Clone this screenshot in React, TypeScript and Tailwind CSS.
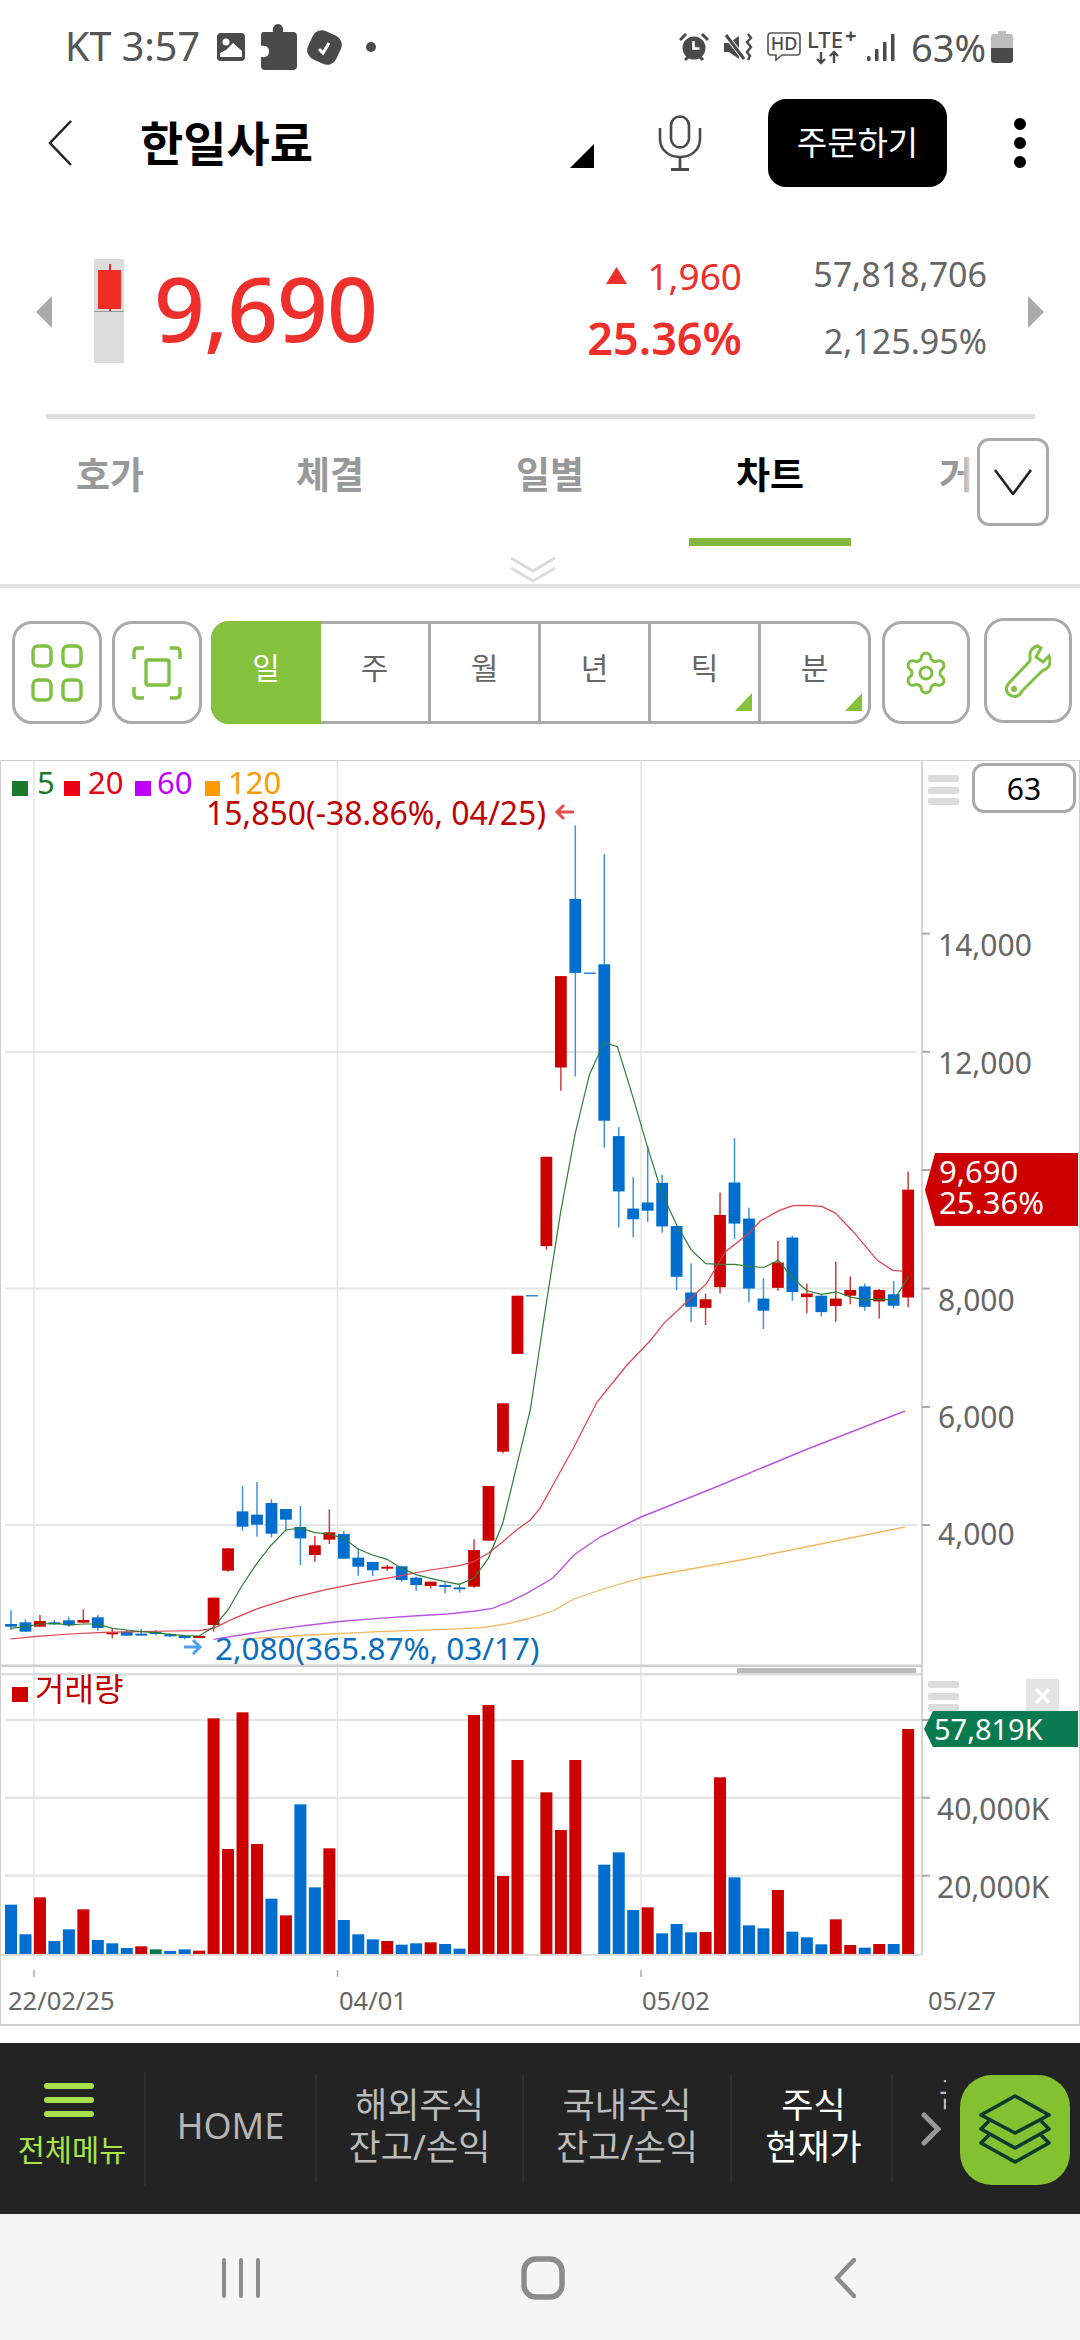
import { Settings } from 'lucide-react'

// traced from the reference crops: a = lower left crop, b = right hand crop
const ax = (x: number) => x / 2.904
const ay = (y: number) => 1400 + y / 3
const bx = (x: number) => 480 + x / 2.605
const by = (y: number) => 780 + y / 2.8

const BLUE = '#006ecf'
const RED = '#cc0000'

type C = [string, number, number, number, number]

const candlesA: C[] = [
  ['b', 630, 672, 680, 690], ['b', 658, 667, 695, 695], ['r', 645, 663, 680, 680], ['b', 660, 667, 670, 675],
  ['b', 650, 661, 676, 680], ['r', 628, 660, 668, 668], ['b', 645, 652, 684, 692], ['r', 685, 697, 700, 715],
  ['b', 690, 695, 707, 707], ['b', 688, 701, 704, 706], ['b', 690, 696, 700, 706], ['b', 700, 703, 706, 711],
  ['b', 705, 708, 710, 718], ['r', 708, 708, 711, 711], ['r', 592, 593, 675, 695], ['r', 444, 445, 512, 515],
  ['b', 258, 334, 380, 392], ['b', 246, 344, 374, 410], ['b', 298, 309, 401, 412], ['b', 327, 327, 359, 392],
  ['b', 318, 381, 415, 495], ['r', 408, 436, 465, 485], ['r', 328, 397, 419, 432], ['b', 392, 402, 476, 476],
  ['b', 445, 473, 500, 527], ['b', 485, 486, 511, 528], ['r', 495, 500, 505, 512], ['b', 497, 499, 540, 545],
  ['b', 530, 533, 555, 572], ['r', 545, 545, 558, 566], ['b', 548, 555, 560, 580], ['b', 550, 562, 566, 578],
  ['r', 418, 450, 560, 563], ['r', 258, 258, 422, 422], ['r', 10, 10, 155, 160],
]

const candlesB: C[] = [
  ['r', 1444, 1444, 1607, 1607], ['d', 1444, 1444, 1446, 1446], ['r', 1055, 1055, 1305, 1315], ['r', 549, 549, 805, 870],
  ['b', 127, 333, 540, 830], ['d', 541, 541, 543, 543], ['b', 208, 516, 954, 1030], ['b', 972, 997, 1152, 1253],
  ['b', 1112, 1200, 1230, 1280], ['b', 1025, 1183, 1206, 1237], ['b', 1105, 1128, 1250, 1268], ['b', 1249, 1249, 1391, 1428],
  ['b', 1353, 1435, 1475, 1518], ['r', 1438, 1454, 1478, 1526], ['r', 1155, 1218, 1420, 1438], ['b', 1003, 1127, 1242, 1285],
  ['b', 1198, 1228, 1424, 1462], ['b', 1395, 1452, 1486, 1537], ['r', 1290, 1351, 1422, 1430], ['b', 1276, 1281, 1434, 1458],
  ['r', 1410, 1438, 1448, 1493], ['b', 1440, 1444, 1490, 1502], ['r', 1348, 1452, 1473, 1517], ['r', 1390, 1428, 1444, 1468],
  ['b', 1410, 1418, 1475, 1486], ['r', 1425, 1428, 1460, 1508], ['b', 1403, 1440, 1472, 1480], ['r', 1096, 1147, 1449, 1476],
]

const candles = [
  ...candlesA.map(([c, h, t, b, l]) => ({ c, h: ay(h), t: ay(t), b: ay(b), l: ay(l) })),
  ...candlesB.map(([c, h, t, b, l]) => ({ c, h: by(h), t: by(t), b: by(b), l: by(l) })),
]

const pa = (p: number[][]) => p.map(([x, y]) => `${ax(x)},${ay(y)}`).join(' ')
const pb = (p: number[][]) => p.map(([x, y]) => `${bx(x)},${by(y)}`).join(' ')

const ma5 = pa([[30, 685], [74, 680], [116, 672], [160, 670], [200, 675], [242, 672], [284, 672], [326, 685], [368, 690], [410, 695], [452, 698], [494, 703], [536, 707], [578, 708], [620, 682], [662, 630], [704, 555], [746, 490], [788, 435], [830, 390], [872, 384], [914, 398], [956, 402], [998, 415], [1040, 447], [1082, 465], [1124, 478], [1166, 505], [1208, 524], [1250, 535], [1292, 545], [1334, 553], [1376, 535], [1418, 475], [1460, 370], [1500, 200], [1540, 30]])
  + ' ' + pb([[172, 1470], [210, 1210], [248, 990], [285, 825], [323, 735], [358, 747], [399, 890], [437, 1030], [475, 1160], [512, 1245], [550, 1315], [588, 1354], [626, 1356], [663, 1356], [701, 1362], [739, 1365], [777, 1345], [815, 1395], [852, 1430], [890, 1440], [928, 1433], [966, 1448], [1003, 1455], [1041, 1454], [1079, 1455], [1117, 1390]])

const ma20 = pa([[30, 717], [100, 710], [200, 702], [300, 697], [400, 695], [500, 693], [578, 692], [620, 685], [680, 655], [750, 625], [850, 593], [950, 568], [1050, 548], [1150, 530], [1250, 510], [1334, 497], [1376, 485], [1420, 458], [1460, 425], [1500, 390], [1540, 360], [1568, 325]])
  + ' 574,1447 597,1402 627,1365 '
  + pb([[445, 1568], [480, 1520], [530, 1470], [590, 1410], [640, 1320], [700, 1270], [730, 1235], [780, 1205], [815, 1192], [850, 1191], [890, 1194], [925, 1212], [970, 1262], [1035, 1345], [1075, 1373], [1100, 1375]])

const ma60 = pa([[620, 718], [700, 705], [800, 688], [900, 675], [1000, 663], [1100, 655], [1200, 648], [1300, 642], [1380, 633], [1430, 625], [1480, 605], [1530, 580]])
  + ' 553,1578 574,1555 600,1537 641,1517 716,1487 805,1450 905,1411'

const ma120 = pa([[700, 718], [900, 705], [1100, 695], [1300, 688], [1400, 683], [1480, 670], [1530, 657]])
  + ' 553,1611 574,1599 600,1590 641,1578 746,1559 905,1527'

// top of each volume bar, 0 = no bar that day
const volumes: [string, number][] = [
  ['b', 794], ['b', 883], ['r', 772], ['b', 903], ['b', 868], ['r', 808], ['b', 900], ['b', 910], ['b', 924], ['r', 919],
  ['g', 928], ['b', 933], ['b', 928], ['r', 932], ['r', 235], ['r', 627], ['r', 217], ['r', 612], ['b', 776], ['r', 826],
  ['b', 493], ['b', 742], ['r', 625], ['b', 840], ['b', 883], ['b', 898], ['r', 903], ['b', 914], ['b', 910], ['r', 907],
  ['b', 912], ['b', 926], ['r', 225], ['r', 195], ['r', 708], ['r', 360], ['r', 0], ['r', 457], ['r', 570], ['r', 360],
  ['r', 0], ['b', 674], ['b', 637], ['b', 810], ['r', 802], ['b', 880], ['b', 852], ['b', 877], ['r', 876], ['r', 412],
  ['b', 712], ['b', 856], ['b', 865], ['r', 750], ['b', 875], ['b', 892], ['b', 913], ['r', 838], ['r', 915], ['b', 923],
  ['r', 912], ['b', 912], ['r', 267],
]

const barX = (i: number) => 11 + i * 14.47
const volColor = (c: string) => (c === 'r' ? RED : c === 'g' ? '#0a7a50' : BLUE)

function MenuLines({ y }: { y: number }) {
  return (
    <g fill="#dcdcdc">
      <rect x="928" y={y} width="31" height="7" rx="2" />
      <rect x="928" y={y + 12} width="31" height="7" rx="2" />
      <rect x="928" y={y + 23} width="31" height="7" rx="2" />
    </g>
  )
}

function Chart() {
  return (
    <svg viewBox="1 761 1078 1264" className="block h-[1264px] w-[1078px]">
      {/* grid */}
      {[34, 337.5, 641].map(x => (
        <line key={x} x1={x} x2={x} y1="761" y2="1955" stroke="#e4e4e4" strokeWidth="1.5" />
      ))}
      {[1052, 1288.6, 1525].map(y => (
        <line key={y} x1="5" x2="917" y1={y} y2={y} stroke="#e6e6e6" strokeWidth="2" />
      ))}
      {[1720, 1797.7, 1875.7].map(y => (
        <line key={y} x1="5" x2="921" y1={y} y2={y} stroke="#e6e6e6" strokeWidth="2.5" />
      ))}
      <line x1="922" x2="922" y1="761" y2="1955" stroke="#d4d4d4" strokeWidth="2" />
      <rect x="0" y="1664.5" width="921" height="2.5" fill="#cfcfcf" />
      <rect x="0" y="1673" width="921" height="2.5" fill="#dcdcdc" />
      <rect x="737" y="1668" width="179" height="5" fill="#bbbbbb" />
      {[933.6, 1051.8, 1170, 1288.6, 1407, 1525, 1720, 1797.7, 1875.7].map(y => (
        <line key={y} x1="922" x2="930" y1={y} y2={y} stroke="#aaaaaa" strokeWidth="2" />
      ))}

      {/* moving averages */}
      <polyline points={ma120} fill="none" stroke="#f2b862" strokeWidth="1.3" />
      <polyline points={ma60} fill="none" stroke="#bb55e0" strokeWidth="1.4" />

      {/* candles */}
      {candles.map((k, i) => {
        const x = barX(i)
        if (k.c === 'd') {
          return <line key={i} x1={x - 6} x2={x + 6} y1={k.t} y2={k.t} stroke="#2f86d0" strokeWidth="1.5" />
        }
        const fill = k.c === 'r' ? RED : BLUE
        return (
          <g key={i}>
            <line x1={x} x2={x} y1={k.h} y2={k.l} stroke={k.c === 'r' ? '#d33b3b' : '#3f93db'} strokeWidth="1.5" />
            <rect x={x - 5.9} y={k.t} width="11.8" height={Math.max(k.b - k.t, 2)} fill={fill} />
          </g>
        )
      })}
      <polyline points={ma20} fill="none" stroke="#e2404c" strokeWidth="1.2" />
      <polyline points={ma5} fill="none" stroke="#2f7d36" strokeWidth="1.2" />

      {/* legend */}
      <g className="text-[31px]">
        <rect x="12" y="781" width="16" height="15" fill="#1a7a2a" />
        <text x="37" y="782" dominantBaseline="central" fill="#1a7a2a">5</text>
        <rect x="64" y="781" width="16" height="15" fill="#f00014" />
        <text x="88" y="782" dominantBaseline="central" fill="#e60012">20</text>
        <rect x="135" y="781" width="16" height="15" fill="#c000ff" />
        <text x="157" y="782" dominantBaseline="central" fill="#c000ff">60</text>
        <rect x="205" y="781" width="15" height="15" fill="#ff9a00" />
        <text x="228" y="782" dominantBaseline="central" fill="#ff9a00">120</text>
      </g>

      {/* high, low */}
      <text x="206" y="812" dominantBaseline="central" fill="#c00000" className="text-[32px]">15,850(-38.86%, 04/25)</text>
      <path d="M574 812H557M564 805l-7 7 7 7" fill="none" stroke="#e8504f" strokeWidth="3" />
      <text x="215" y="1647" dominantBaseline="central" fill="#0a6ebd" className="text-[31.5px]">2,080(365.87%, 03/17)</text>
      <path d="M184 1647H200M193 1640l7 7-7 7" fill="none" stroke="#4aa3ee" strokeWidth="3" />

      <MenuLines y={775} />

      {/* price axis */}
      {[['14,000', 944], ['12,000', 1062], ['8,000', 1299], ['6,000', 1416], ['4,000', 1533]].map(([t, y]) => (
        <text key={t} x="938" y={y} dominantBaseline="central" fill="#666666" className="text-[30px]">{t}</text>
      ))}

      {/* price tag */}
      <polygon points="925,1190 935,1153 1078,1153 1078,1226 935,1226" fill={RED} />
      <text x="939" y="1171" dominantBaseline="central" fill="#fff" className="text-[31px]">9,690</text>
      <text x="939" y="1202" dominantBaseline="central" fill="#fff" className="text-[31px]">25.36%</text>

      {/* volume */}
      <rect x="12" y="1687" width="16" height="15" fill={RED} />
      <text x="35" y="1688" dominantBaseline="central" fill="#c00000" className="text-[32px]">거래량</text>
      {volumes.map(([c, top], i) =>
        top === 0 ? null : (
          <rect key={i} x={barX(i) - 6} y={1640 + top / 3} width="12" height={1954.7 - (1640 + top / 3)} fill={volColor(c)} />
        ),
      )}
      <rect x="0" y="1954" width="921" height="2" fill="#dddddd" />

      <MenuLines y={1681} />
      <rect x="1026" y="1679" width="33" height="34" fill="#e4e4e4" />
      <path d="M1036 1689l13 14M1049 1689l-13 14" stroke="#fff" strokeWidth="3.5" />

      <polygon points="924,1729 933,1711 1078,1711 1078,1747 933,1747" fill="#0a7a50" />
      <text x="934" y="1728" dominantBaseline="central" fill="#fff" className="text-[29px]">57,819K</text>
      <text x="937" y="1808" dominantBaseline="central" fill="#666666" className="text-[30px]">40,000K</text>
      <text x="937" y="1886" dominantBaseline="central" fill="#666666" className="text-[30px]">20,000K</text>

      {/* dates */}
      {[34, 337.5, 641].map(x => (
        <line key={x} x1={x} x2={x} y1="1970" y2="1977" stroke="#aaaaaa" strokeWidth="1.5" />
      ))}
      {[['22/02/25', 8], ['04/01', 339], ['05/02', 642], ['05/27', 928]].map(([t, x]) => (
        <text key={t} x={x} y="2000" dominantBaseline="central" fill="#666666" className="text-[25.5px]">{t}</text>
      ))}
    </svg>
  )
}

function StatusBar() {
  return (
    <div className="flex h-[85px] items-center justify-between pl-[65px] pr-[67px] pt-[9px] text-[#555]">
      <div className="flex items-center">
        <span className="w-[152px] text-[39.5px] leading-none">KT 3:57</span>
        <svg width="28" height="28" viewBox="0 0 28 28">
          <rect width="28" height="28" rx="4" fill="#4a4a4a" />
          <circle cx="9" cy="9" r="3.5" fill="#fff" />
          <path d="M3 24v-4l6-3 7-7 9 8v6z" fill="#fff" />
        </svg>
        <svg width="37" height="46" viewBox="0 0 37 46" className="ml-[15px]">
          <path d="M3 8H13C12 3 15 0 18 0C21 0 24 3 23 8H33Q37 8 37 12V42Q37 46 33 46H5Q1 46 1 42V33C8 34 9 30 9 27.5C9 25 8 21 1 22V12Q1 8 3 8Z" fill="#4a4a4a" />
        </svg>
        <svg width="37" height="37" viewBox="0 0 37 37" className="ml-[9px]">
          <rect x="3" y="3" width="31" height="31" rx="10" fill="#4a4a4a" transform="rotate(25 18.5 18.5)" />
          <path d="M13 20l4 4 6-10" fill="none" stroke="#fff" strokeWidth="3" />
        </svg>
        <span className="ml-[23px] h-[10px] w-[10px] rounded-full bg-[#4a4a4a]" />
      </div>
      <div className="flex items-center">
        <svg width="30" height="30" viewBox="0 0 30 30">
          <circle cx="15" cy="16" r="11.5" fill="#4a4a4a" />
          <path d="M1 8l6-6M29 8l-6-6M6 28l3-3M24 28l-3-3" stroke="#4a4a4a" strokeWidth="3" />
          <path d="M14.5 9v7.5h6" fill="none" stroke="#fff" strokeWidth="2.6" />
        </svg>
        <svg width="29" height="29" viewBox="0 0 29 29" className="ml-[15px]">
          <path d="M0 10h5l10-7v23l-10-7h-5z" fill="#4a4a4a" />
          <path d="M1 1l20 26" stroke="#fff" strokeWidth="5" />
          <path d="M2 2l18 24" stroke="#4a4a4a" strokeWidth="3" />
          <path d="M24 1l3 4-4 4 4 5-4 5 3 4-2 4" fill="none" stroke="#4a4a4a" strokeWidth="2.4" />
        </svg>
        <svg width="34" height="30" viewBox="0 0 34 30" className="ml-[14px]">
          <path d="M4 1H30Q33 1 33 4V20Q33 23 30 23H15L9 28V23H4Q1 23 1 20V4Q1 1 4 1Z" fill="none" stroke="#555" strokeWidth="1.6" />
          <text x="17" y="18" textAnchor="middle" fill="#4a4a4a" className="text-[18px] font-medium">HD</text>
        </svg>
        <svg width="52" height="36" viewBox="0 0 52 36" className="ml-[6px] overflow-visible">
          <text x="0" y="19" fill="#4a4a4a" className="text-[22px] font-medium">LTE</text>
          <text x="38" y="14" fill="#4a4a4a" className="text-[20px] font-bold">+</text>
          <path d="M14 23v11M10 30l4 4 4-4M27 34v-11M23 27l4-4 4 4" fill="none" stroke="#4a4a4a" strokeWidth="2.4" />
        </svg>
        <svg width="28" height="28" viewBox="0 0 28 28" className="ml-[8px]">
          <rect x="0" y="23" width="3.5" height="5" rx="1.5" fill="#4a4a4a" />
          <rect x="8" y="16" width="3.5" height="12" rx="1" fill="#4a4a4a" />
          <rect x="16" y="9" width="3.5" height="19" rx="1" fill="#4a4a4a" />
          <rect x="24" y="1" width="3.5" height="27" rx="1" fill="#4a4a4a" />
        </svg>
        <span className="ml-[16px] text-[38px] leading-none">63%</span>
        <svg width="22" height="32" viewBox="0 0 22 32" className="ml-[5px]">
          <path d="M7 0h8v3h4q3 0 3 3v11H0V6q0-3 3-3h4z" fill="#bdbdbd" />
          <path d="M0 17h22v12q0 3-3 3H3q-3 0-3-3z" fill="#4a4a4a" />
        </svg>
      </div>
    </div>
  )
}

function Header() {
  return (
    <div className="flex h-[116px] items-center">
      <svg width="26" height="48" viewBox="0 0 26 48" className="ml-[47px]">
        <path d="M24 2L3 24l21 22" fill="none" stroke="#222" strokeWidth="2.5" />
      </svg>
      <h1 className="ml-[67px] w-[430px] text-[47px] font-bold leading-none text-black">한일사료</h1>
      <svg width="24" height="24" viewBox="0 0 24 24" className="mt-[25px]">
        <path d="M24 0V24H0z" fill="#000" />
      </svg>
      <svg width="44" height="56" viewBox="0 0 44 56" className="ml-[64px]">
        <rect x="13" y="1.5" width="18" height="31" rx="9" fill="none" stroke="#4a4a4a" strokeWidth="2.6" />
        <path d="M2 13v11c0 11 9 18 20 18s20-7 20-18V13" fill="none" stroke="#4a4a4a" strokeWidth="2.6" />
        <path d="M22 42v12M13 54.5h18" stroke="#4a4a4a" strokeWidth="2.8" />
      </svg>
      <button className="ml-[66px] flex h-[88px] w-[179px] items-center justify-center rounded-[18px] bg-black text-[33px] text-white">
        주문하기
      </button>
      <div className="ml-[67px] flex flex-col gap-[7px]">
        <span className="h-[12px] w-[12px] rounded-full bg-black" />
        <span className="h-[12px] w-[12px] rounded-full bg-black" />
        <span className="h-[12px] w-[12px] rounded-full bg-black" />
      </div>
    </div>
  )
}

function Quote() {
  return (
    <div className="flex h-[213px] items-center">
      <svg width="16" height="32" viewBox="0 0 16 32" className="ml-[36px] mt-[9px]">
        <path d="M16 0V32L0 16z" fill="#aaaaaa" />
      </svg>
      <div className="relative ml-[42px] mt-[7px] h-[104px] w-[30px] bg-[#dcdcdc]">
        <span className="absolute left-[15px] top-[5px] h-[47px] w-[1.5px] bg-[#e8302a]" />
        <span className="absolute left-[4px] top-[11px] h-[39px] w-[23px] bg-[#ee2d26]" />
        <span className="absolute left-0 top-[52px] h-[1px] w-[30px] bg-[#999]" />
      </div>
      <div className="ml-[30px] w-[452px] text-[89px] font-medium leading-none tracking-[-1px] text-[#ee2f2b]">9,690</div>
      <div className="flex w-[136px] flex-col items-end text-[#ee2f2b]">
        <div className="flex h-[60px] items-center">
          <svg width="21" height="17" viewBox="0 0 21 17" className="mr-[20px]">
            <path d="M10.5 0L21 17H0z" fill="#ee2f2b" />
          </svg>
          <span className="text-[37px] leading-none">1,960</span>
        </div>
        <div className="whitespace-nowrap text-[45px] font-semibold leading-[64px]">25.36%</div>
      </div>
      <div className="ml-[46px] flex w-[199px] flex-col items-end text-[34px] leading-[67px] text-[#666]">
        <div>57,818,706</div>
        <div>2,125.95%</div>
      </div>
      <svg width="16" height="32" viewBox="0 0 16 32" className="ml-[41px] mt-[9px]">
        <path d="M0 0V32L16 16z" fill="#aaaaaa" />
      </svg>
    </div>
  )
}

function Tabs() {
  const tabs = ['호가', '체결', '일별', '차트', '거래원']
  return (
    <div className="relative h-[127px] overflow-hidden">
      <div className="grid w-[1100px] grid-cols-5">
        {tabs.map(t => (
          <div key={t} className="relative flex h-[127px] justify-center pt-[34px]">
            <span className={`text-[37px] font-bold leading-[44px] ${t === '차트' ? 'text-black' : 'text-[#999]'}`}>{t}</span>
            {t === '차트' && <span className="absolute bottom-0 left-[29px] h-[8px] w-[162px] bg-[#83b83e]" />}
          </div>
        ))}
      </div>
      <div className="absolute left-[960px] top-[19px] flex h-[88px] w-[120px] items-center bg-gradient-to-r from-transparent to-white to-[14%]">
        <button className="ml-[17px] flex h-[88px] w-[72px] items-center justify-center rounded-[12px] border-[3px] border-[#aaa] bg-white">
          <svg width="38" height="26" viewBox="0 0 38 26">
            <path d="M1 1l18 24L37 1" fill="none" stroke="#222" strokeWidth="2.6" />
          </svg>
        </button>
      </div>
    </div>
  )
}

function ToolButton({ className, children }: { className: string; children: React.ReactNode }) {
  return (
    <div className={`flex items-center justify-center rounded-[20px] border-[3px] border-[#aaa] bg-white ${className}`}>
      {children}
    </div>
  )
}

function Toolbar() {
  const items = ['주', '월', '년', '틱', '분']
  return (
    <div className="flex h-[172px] items-start pl-[12px] pt-[33px]">
      <ToolButton className="h-[103px] w-[90px]">
        <svg width="52" height="58" viewBox="0 0 52 58" fill="none" stroke="#7fc043" strokeWidth="3.4">
          <rect x="2" y="2" width="18" height="20" rx="5" />
          <rect x="32" y="2" width="18" height="20" rx="5" />
          <rect x="2" y="36" width="18" height="20" rx="5" />
          <rect x="32" y="36" width="18" height="20" rx="5" />
        </svg>
      </ToolButton>
      <ToolButton className="ml-[10px] h-[103px] w-[90px]">
        <svg width="50" height="54" viewBox="0 0 50 54" fill="none" stroke="#7fc043" strokeWidth="3.4">
          <path d="M2 13V6q0-4 4-4h6M38 2h6q4 0 4 4v7M2 41v7q0 4 4 4h6M38 52h6q4 0 4-4v-7" />
          <rect x="14" y="14" width="23" height="25" rx="2" />
        </svg>
      </ToolButton>
      <div className="ml-[9px] flex h-[103px] w-[660px] rounded-[18px] border-[3px] border-[#aaa] text-[30px] leading-[38px] text-[#666]">
        <div className="-my-[3px] -ml-[3px] flex w-[110px] justify-center rounded-l-[18px] bg-[#84c13c] pt-[28px] text-white">일</div>
        {items.map((t, i) => (
          <div key={t} className={`relative flex flex-1 justify-center pt-[25px] ${i > 0 ? 'border-l-[3px] border-[#aaa]' : ''}`}>
            {t}
            {i > 2 && (
              <span className="absolute bottom-[10px] right-[6px] h-[18px] w-[17px] bg-[#84c13c] [clip-path:polygon(100%_0,100%_100%,0_100%)]" />
            )}
          </div>
        ))}
      </div>
      <ToolButton className="ml-[11px] h-[103px] w-[88px]">
        <Settings size={48} color="#7fc043" strokeWidth={1.5} />
      </ToolButton>
      <ToolButton className="-mt-[3px] ml-[14px] h-[105px] w-[88px]">
        <svg width="46" height="54" viewBox="0 0 46 54" fill="none" stroke="#7fc043" strokeWidth="3">
          <path d="M33 2C27 3 24 8 25 13C25.5 16 25 17 24 18L4 39C0 43 1 49 5 51C10 54 15 52 17 47L37 27C38 26 39 25.5 41 25C45 23 46 17 44 12L38 18L31 13L36 4Z" />
          <circle cx="9" cy="45" r="1.5" fill="#7fc043" />
        </svg>
      </ToolButton>
    </div>
  )
}

function BottomBar() {
  return (
    <div className="relative flex h-[171px] items-center bg-[#232323]">
      <div className="flex h-[114px] w-[146px] flex-col items-center border-r-2 border-[#2e2e2e]">
        <div className="mt-[11px] flex w-[50px] -translate-x-[3px] flex-col gap-[8px]">
          <span className="h-[6px] rounded-full bg-[#a6e04a]" />
          <span className="h-[6px] rounded-full bg-[#a6e04a]" />
          <span className="h-[6px] rounded-full bg-[#a6e04a]" />
        </div>
        <span className="mt-[13px] whitespace-nowrap text-[29.5px] leading-[40px] text-[#a8e44a]">전체메뉴</span>
      </div>
      <div className="flex h-[108px] w-[171px] items-center justify-center border-r-2 border-[#2e2e2e] pb-[5px] text-[36px] text-[#b4b4b4]">HOME</div>
      <div className="flex h-[108px] w-[207px] flex-col items-center justify-center border-r-2 border-[#2e2e2e] pb-[6px] text-[35px] leading-[42px] text-[#bbb]">
        <span>해외주식</span>
        <span>잔고/손익</span>
      </div>
      <div className="flex h-[108px] w-[208px] flex-col items-center justify-center border-r-2 border-[#2e2e2e] pb-[6px] text-[35px] leading-[42px] text-[#bbb]">
        <span>국내주식</span>
        <span>잔고/손익</span>
      </div>
      <div className="flex h-[108px] w-[161px] flex-col items-center justify-center border-r-2 border-[#2e2e2e] pb-[6px] pl-[4px] text-[35px] leading-[42px] text-white">
        <span>주식</span>
        <span>현재가</span>
      </div>
      <div className="flex h-[108px] w-[53px] justify-end self-start overflow-hidden pt-[30px]">
        <span className="-mr-[24px] text-[34px] leading-[42px] text-[#bbb]">금</span>
      </div>
      <svg width="20" height="34" viewBox="0 0 20 34" className="absolute left-[921px] top-[69px]">
        <path d="M3 3l14 14L3 31" fill="none" stroke="#999" strokeWidth="5" strokeLinecap="round" />
      </svg>
      <div className="absolute left-[960px] top-[32px] flex h-[110px] w-[110px] items-center justify-center rounded-[32px] bg-[#84c130]">
        <svg width="72" height="72" viewBox="0 0 72 72" fill="none" stroke="#0b3a2e" strokeWidth="3.6" strokeLinejoin="round">
          <path d="M36 2L70 21 36 39 2 21Z" />
          <path d="M10 27L2 35 36 54 70 35 62 27" />
          <path d="M10 41L2 49 36 68 70 49 62 41" />
        </svg>
      </div>
    </div>
  )
}

function NavBar() {
  return (
    <div className="relative flex h-[126px] bg-[#f5f5f5]">
      <svg width="38" height="40" viewBox="0 0 38 40" className="ml-[222px] mt-[44px]" stroke="#8c8c8c" strokeWidth="4" strokeLinecap="round">
        <path d="M2 2v36M19 2v36M36 2v36" />
      </svg>
      <svg width="44" height="44" viewBox="0 0 44 44" className="ml-[261px] mt-[42px]">
        <rect x="3" y="3" width="38" height="38" rx="12" fill="none" stroke="#8c8c8c" strokeWidth="5.5" />
      </svg>
      <svg width="22" height="40" viewBox="0 0 22 40" className="ml-[269px] mt-[44px]">
        <path d="M20 2L3 20l17 18" fill="none" stroke="#8c8c8c" strokeWidth="4.5" strokeLinecap="round" />
      </svg>
    </div>
  )
}

export default function App() {
  return (
    <div className="flex h-[2340px] w-[1080px] flex-col overflow-hidden bg-white font-['Noto_Sans','Noto_Sans_CJK_KR',sans-serif]">
      <StatusBar />
      <Header />
      <Quote />
      <div className="mx-[46px] h-[5px] w-[989px] bg-[#dddddd]" />
      <Tabs />

      {/* collapse handle */}
      <div className="flex h-[38px] justify-center pr-[14px] pt-[11px]">
        <svg width="46" height="26" viewBox="0 0 46 26" fill="none" stroke="#dcdcdc" strokeWidth="3">
          <path d="M1 1l22 13L45 1M1 11l22 13 22-13" />
        </svg>
      </div>
      <div className="h-[4px] bg-[#e5e5e5]" />

      <Toolbar />

      <div className="h-[1266px] w-[1080px] border border-b-2 border-[#d0d0d0]">
        <div className="relative">
          <Chart />
          <div className="absolute left-[971px] top-[2px] flex h-[50px] w-[104px] items-center justify-center rounded-[12px] border-[3px] border-[#aaa] bg-white text-[30px] text-black">
            63
          </div>
        </div>
      </div>

      <div className="h-[17px]" />
      <BottomBar />
      <NavBar />
    </div>
  )
}
